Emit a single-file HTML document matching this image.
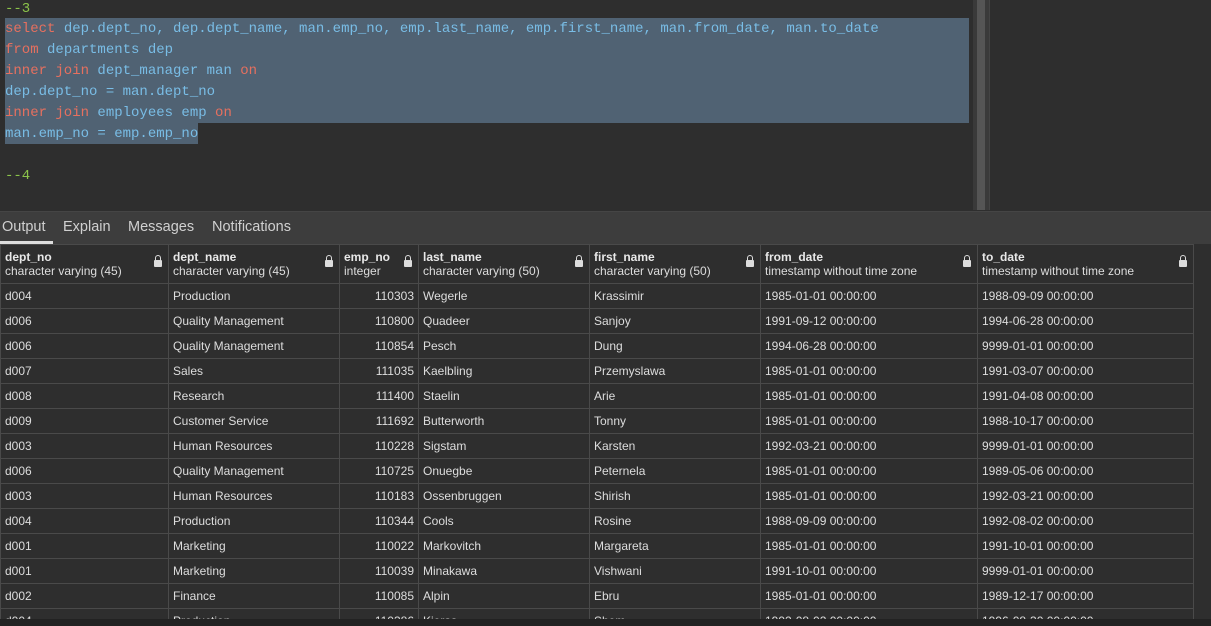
<!DOCTYPE html>
<html><head><style>
*{margin:0;padding:0;box-sizing:border-box}
html,body{width:1211px;height:626px;overflow:hidden}
body{background:#2e2e2e;position:relative;font-family:"Liberation Sans",sans-serif}
.ed{position:absolute;left:0;top:0;width:973px;height:210px;background:#2e2e2e;font-family:"Liberation Mono",monospace;font-size:14px}
.ln{position:absolute;left:5px;height:21px;line-height:21px;white-space:pre;color:#79bde6}
.k{color:#e6705f}.c{color:#8bc34a}
.sel{position:absolute;background:#506273}
.sb{position:absolute;left:973px;top:0;width:16px;height:210px;background:#3a3a3a}
.sb i{position:absolute;left:4px;top:0;width:8px;height:210px;background:#555}
.rp{position:absolute;left:989px;top:0;width:1px;height:210px;background:#444}
.tabs{position:absolute;left:0;top:211px;width:1211px;height:33px;background:#3d3d3d;border-top:1px solid #454545}
.tabs span{position:absolute;top:7px;font-size:14.5px;color:#d0d0d0}
.ul{position:absolute;left:0;top:29px;width:53px;height:3px;background:#ddd}
table{position:absolute;left:0;top:244px;border-collapse:collapse;font-size:12px;color:#ddd;background:#2e2e2e}
td{border:1px solid #4a4a4a;height:25px;padding:0 4px;white-space:nowrap;overflow:hidden}
th{border:1px solid #4a4a4a;height:39px;padding:0 4px;text-align:left;font-weight:normal;vertical-align:middle;position:relative}
th b{display:block;font-weight:bold;font-size:12px;color:#e8e8e8}
th small{display:block;font-size:12px;color:#ddd}
.lk{position:absolute;right:6px;top:15px;width:8px;height:7px;background:#ddd;border-radius:1px}
.lk:before{content:"";position:absolute;left:1px;top:-5px;width:6px;height:6px;border:1.5px solid #ddd;border-bottom:none;border-radius:3px 3px 0 0;box-sizing:border-box}
.r{text-align:right}
.bot{position:absolute;left:0;top:619px;width:1211px;height:7px;background:#222;z-index:5}
</style></head><body>
<div class="ed">
<div class="sel" style="left:5px;top:18px;width:964px;height:105px"></div>
<div class="sel" style="left:5px;top:123px;width:193px;height:21px"></div>
<div class="ln c" style="top:-1px">--3</div>
<div class="ln" style="top:19px"><span class="k">select</span> dep.dept_no, dep.dept_name, man.emp_no, emp.last_name, emp.first_name, man.from_date, man.to_date</div>
<div class="ln" style="top:40px"><span class="k">from</span> departments dep</div>
<div class="ln" style="top:61px"><span class="k">inner join</span> dept_manager man <span class="k">on</span></div>
<div class="ln" style="top:82px">dep.dept_no = man.dept_no</div>
<div class="ln" style="top:103px"><span class="k">inner join</span> employees emp <span class="k">on</span></div>
<div class="ln" style="top:124px">man.emp_no = emp.emp_no</div>
<div class="ln c" style="top:166px">--4</div>
</div>
<div class="sb"><i></i></div><div class="rp"></div>
<div class="tabs"><span style="left:2px">Output</span><span style="left:63px">Explain</span><span style="left:128px">Messages</span><span style="left:212px">Notifications</span><div class="ul"></div></div>
<table>
<colgroup><col style="width:168px"><col style="width:171px"><col style="width:79px"><col style="width:171px"><col style="width:171px"><col style="width:217px"><col style="width:216px"></colgroup>
<tr><th><b>dept_no</b><small>character varying (45)</small><i class="lk"></i></th><th><b>dept_name</b><small>character varying (45)</small><i class="lk"></i></th><th><b>emp_no</b><small>integer</small><i class="lk"></i></th><th><b>last_name</b><small>character varying (50)</small><i class="lk"></i></th><th><b>first_name</b><small>character varying (50)</small><i class="lk"></i></th><th><b>from_date</b><small>timestamp without time zone</small><i class="lk"></i></th><th><b>to_date</b><small>timestamp without time zone</small><i class="lk"></i></th></tr>
<tr><td>d004</td><td>Production</td><td class="r">110303</td><td>Wegerle</td><td>Krassimir</td><td>1985-01-01 00:00:00</td><td>1988-09-09 00:00:00</td></tr>
<tr><td>d006</td><td>Quality Management</td><td class="r">110800</td><td>Quadeer</td><td>Sanjoy</td><td>1991-09-12 00:00:00</td><td>1994-06-28 00:00:00</td></tr>
<tr><td>d006</td><td>Quality Management</td><td class="r">110854</td><td>Pesch</td><td>Dung</td><td>1994-06-28 00:00:00</td><td>9999-01-01 00:00:00</td></tr>
<tr><td>d007</td><td>Sales</td><td class="r">111035</td><td>Kaelbling</td><td>Przemyslawa</td><td>1985-01-01 00:00:00</td><td>1991-03-07 00:00:00</td></tr>
<tr><td>d008</td><td>Research</td><td class="r">111400</td><td>Staelin</td><td>Arie</td><td>1985-01-01 00:00:00</td><td>1991-04-08 00:00:00</td></tr>
<tr><td>d009</td><td>Customer Service</td><td class="r">111692</td><td>Butterworth</td><td>Tonny</td><td>1985-01-01 00:00:00</td><td>1988-10-17 00:00:00</td></tr>
<tr><td>d003</td><td>Human Resources</td><td class="r">110228</td><td>Sigstam</td><td>Karsten</td><td>1992-03-21 00:00:00</td><td>9999-01-01 00:00:00</td></tr>
<tr><td>d006</td><td>Quality Management</td><td class="r">110725</td><td>Onuegbe</td><td>Peternela</td><td>1985-01-01 00:00:00</td><td>1989-05-06 00:00:00</td></tr>
<tr><td>d003</td><td>Human Resources</td><td class="r">110183</td><td>Ossenbruggen</td><td>Shirish</td><td>1985-01-01 00:00:00</td><td>1992-03-21 00:00:00</td></tr>
<tr><td>d004</td><td>Production</td><td class="r">110344</td><td>Cools</td><td>Rosine</td><td>1988-09-09 00:00:00</td><td>1992-08-02 00:00:00</td></tr>
<tr><td>d001</td><td>Marketing</td><td class="r">110022</td><td>Markovitch</td><td>Margareta</td><td>1985-01-01 00:00:00</td><td>1991-10-01 00:00:00</td></tr>
<tr><td>d001</td><td>Marketing</td><td class="r">110039</td><td>Minakawa</td><td>Vishwani</td><td>1991-10-01 00:00:00</td><td>9999-01-01 00:00:00</td></tr>
<tr><td>d002</td><td>Finance</td><td class="r">110085</td><td>Alpin</td><td>Ebru</td><td>1985-01-01 00:00:00</td><td>1989-12-17 00:00:00</td></tr>
<tr><td>d004</td><td>Production</td><td class="r">110386</td><td>Kieras</td><td>Shem</td><td>1992-08-02 00:00:00</td><td>1996-08-30 00:00:00</td></tr>
</table>
<div class="bot"></div>
</body></html>
